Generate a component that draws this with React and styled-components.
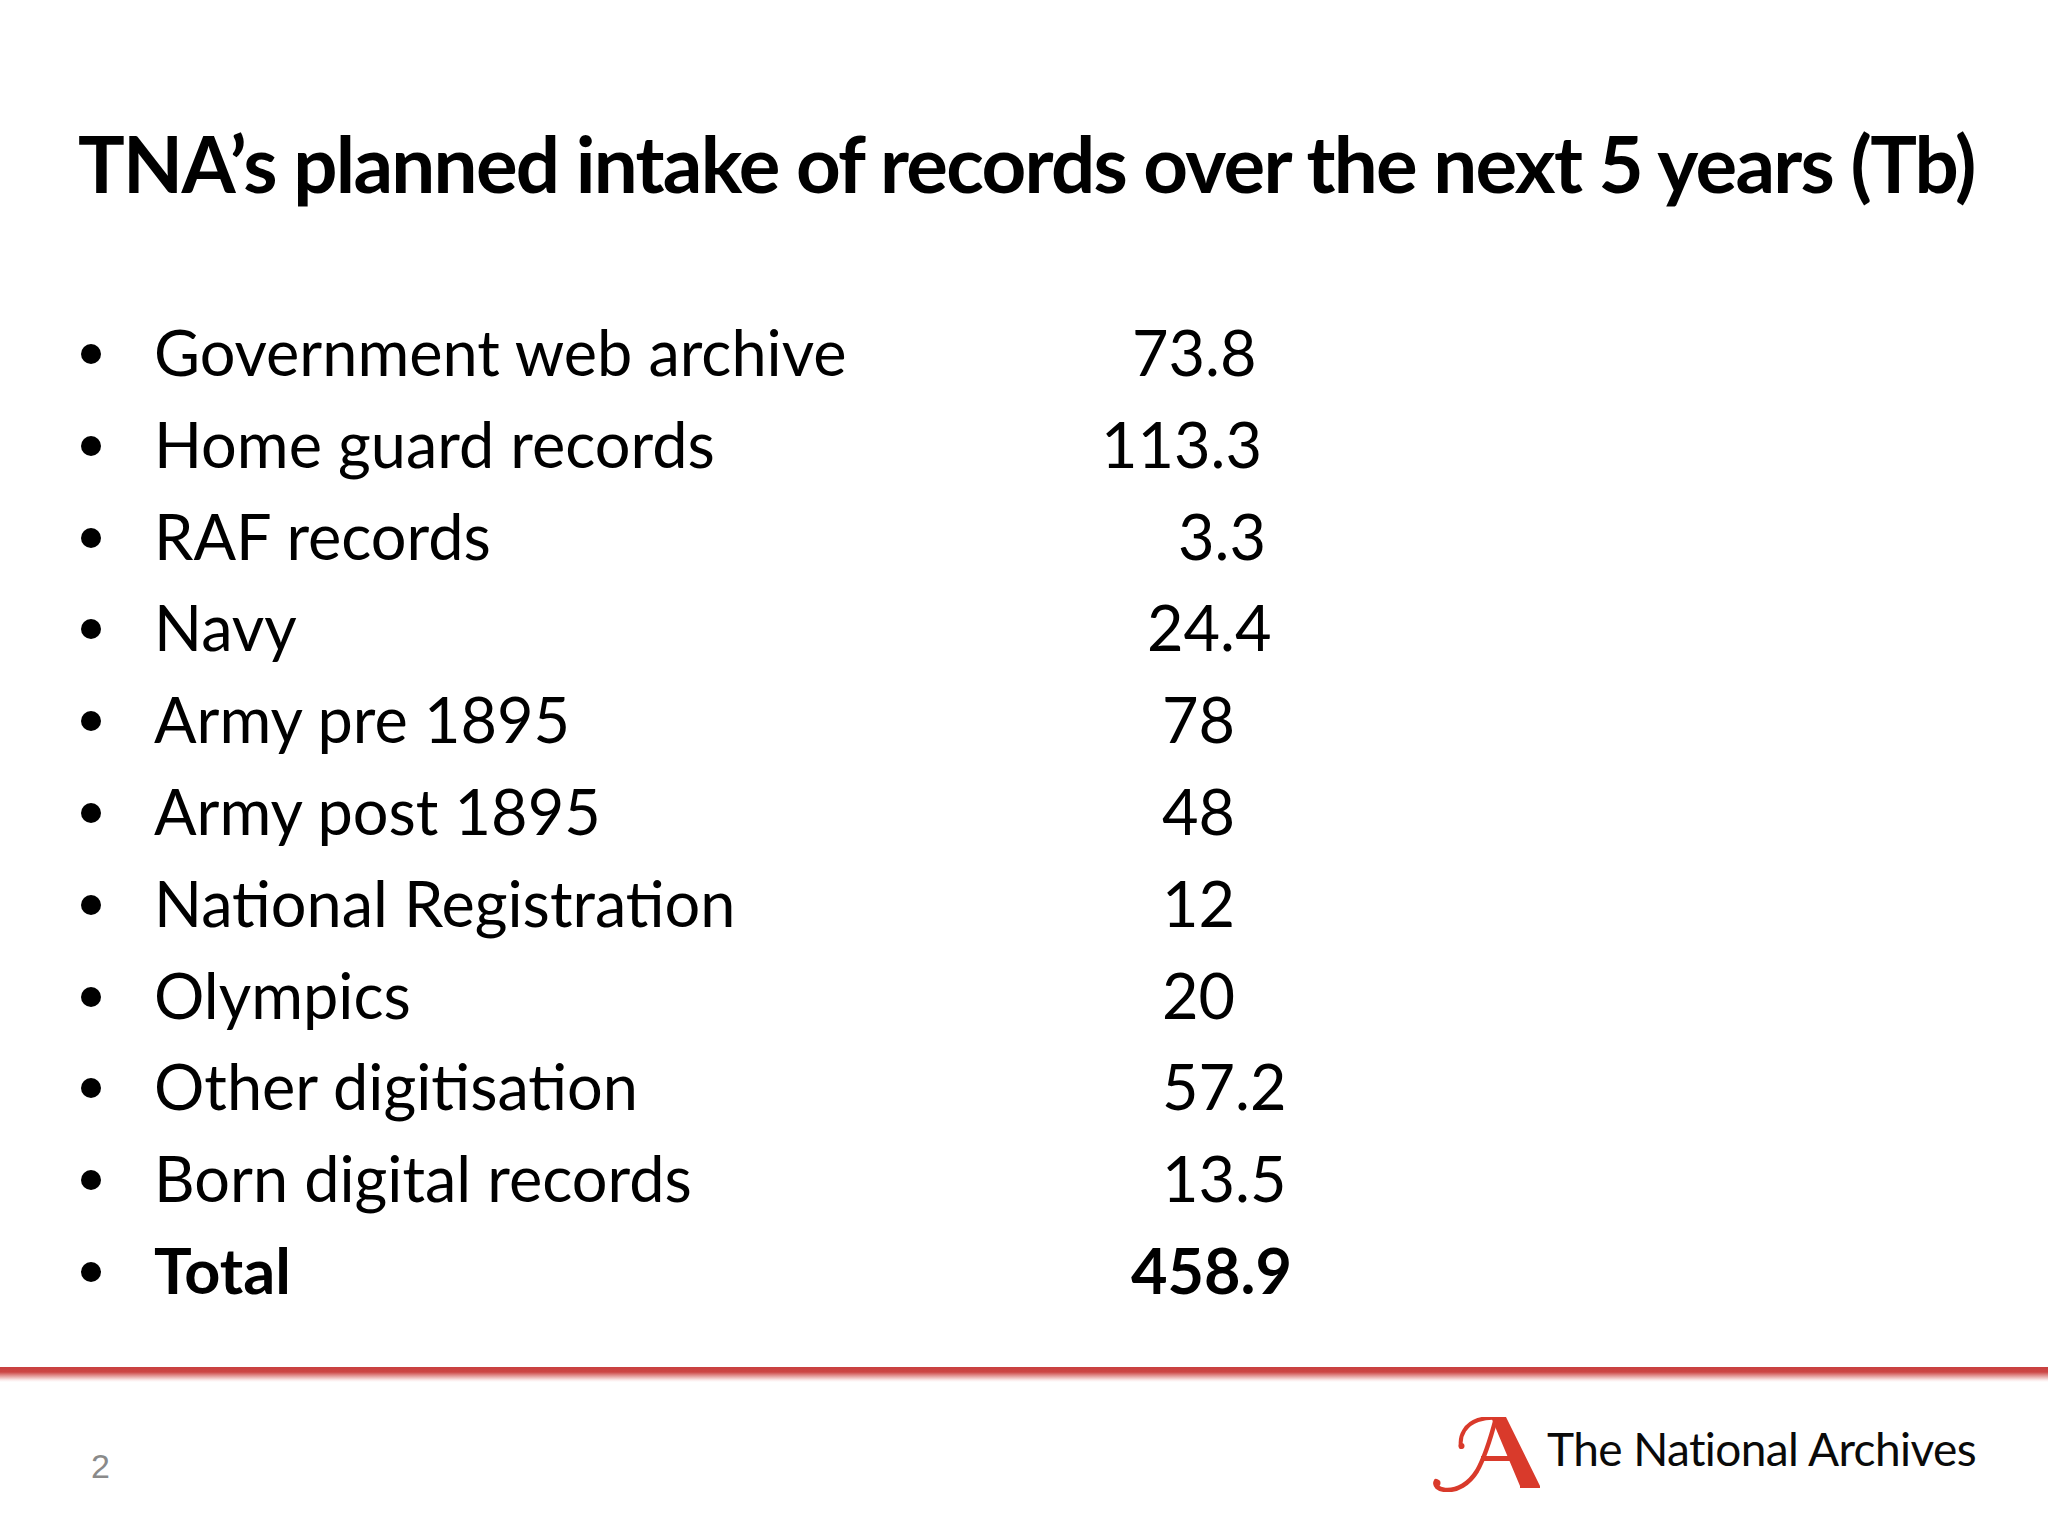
import React from "react";
import styled, { createGlobalStyle } from "styled-components";

//---global-------------------------------------------
const GlobalStyle = createGlobalStyle`
    html, body {
        margin: 0;
        padding: 0;
        background: #ffffff;
    }
    * {
        box-sizing: border-box;
    }
`;

//---styled-------------------------------------------
const Slide = styled.div`
    width: 2048px;
    height: 1536px;
    display: flex;
    flex-direction: column;
    background: #ffffff;
    font-family: Lato, "Open Sans", "Noto Sans", sans-serif;
    color: #000000;
    overflow: hidden;
`;

const Title = styled.h1`
    margin: 124px 0 0 78px;
    font-size: 78px;
    line-height: 1;
    font-weight: 700;
    letter-spacing: -1.7px;
    white-space: nowrap;
`;

const List = styled.ul`
    list-style: none;
    margin: 104px 0 0 0;
    padding: 0 0 0 81px;
`;

const Row = styled.li`
    display: grid;
    grid-template-columns: 73px 947px 1fr;
    height: 91.8px;
    font-size: 63px;
    line-height: 91.8px;
    font-weight: ${(p) => (p.$bold ? 700 : 400)};
    white-space: nowrap;
`;

const Bullet = styled.span`
    display: inline-block;
    width: 20px;
    height: 20px;
    margin-bottom: 12px;
    border-radius: 50%;
    background: #000000;
`;

const BulletCell = styled.span`
    display: block;
`;

const Label = styled.span`
    display: block;
`;

const Value = styled.span`
    display: block;
    padding-left: ${(p) => p.$indent}px;
`;

const Rule = styled.div`
    margin-top: auto;
    height: 15px;
    background: linear-gradient(
        to bottom,
        #c9403f 0px,
        #cc4645 5px,
        #e49a99 9px,
        #fbe9e9 13px,
        #ffffff 15px
    );
`;

const Footer = styled.div`
    height: 154px;
    display: flex;
    align-items: flex-start;
    padding: 0 72px 0 91px;
`;

const PageNumber = styled.span`
    margin-top: 67px;
    font-family: "Liberation Sans", Arial, sans-serif;
    font-size: 34px;
    line-height: 1;
    color: #8a8a8a;
`;

const Logo = styled.div`
    margin-left: auto;
    margin-top: 35px;
    display: flex;
    align-items: flex-start;
    gap: 7px;
`;

const LogoMark = styled.svg`
    width: 107px;
    height: 75px;
    flex: none;
`;

const LogoText = styled.span`
    margin-top: 9px;
    font-family: Lato, "Open Sans", sans-serif;
    font-size: 46px;
    line-height: 1;
    letter-spacing: -0.6px;
    color: #0a0a0a;
    white-space: nowrap;
`;

//---data-------------------------------------------
// value column starts at x=1101; indent reproduces the tab/space alignment of the slide
const records = [
    { label: "Government web archive", value: "73.8", indent: 31 },
    { label: "Home guard records", value: "113.3", indent: 0 },
    { label: "RAF records", value: "3.3", indent: 77 },
    { label: "Navy", value: "24.4", indent: 46 },
    { label: "Army pre 1895", value: "78", indent: 61 },
    { label: "Army post 1895", value: "48", indent: 61 },
    { label: "National Registration", value: "12", indent: 61 },
    { label: "Olympics", value: "20", indent: 61 },
    { label: "Other digitisation", value: "57.2", indent: 61 },
    { label: "Born digital records", value: "13.5", indent: 61 },
    { label: "Total", value: "458.9", indent: 30, bold: true },
];

const ArchivesMark = () => (
    <LogoMark viewBox="0 0 107 75">
        <polygon points="58,0 73,0 107,69 107,71 87,71 87,69" fill="#d93a2b" />
        <rect x="48" y="39" width="33" height="5" fill="#d93a2b" />
        <path
            d="M63 1 C58 20 52 40 44 54 C36 67 24 74 12 73 C5 72 1 69 3 64"
            stroke="#d93a2b"
            strokeWidth="4.5"
            fill="none"
            strokeLinecap="round"
        />
        <path
            d="M28 30 C26 18 33 7 45 3 C52 1 58 0 64 1"
            stroke="#d93a2b"
            strokeWidth="4"
            fill="none"
            strokeLinecap="round"
        />
        <circle cx="28.5" cy="29" r="3" fill="#d93a2b" />
        <circle cx="4" cy="66" r="3.5" fill="#d93a2b" />
    </LogoMark>
);

//---
const App = () => {
    return (
        <>
            <GlobalStyle />
            <Slide>
                <Title>TNA’s planned intake of records over the next 5 years (Tb)</Title>
                <List>
                    {records.map((r) => (
                        <Row key={r.label} $bold={r.bold}>
                            <BulletCell>
                                <Bullet />
                            </BulletCell>
                            <Label>{r.label}</Label>
                            <Value $indent={r.indent}>{r.value}</Value>
                        </Row>
                    ))}
                </List>
                <Rule />
                <Footer>
                    <PageNumber>2</PageNumber>
                    <Logo>
                        <ArchivesMark />
                        <LogoText>The National Archives</LogoText>
                    </Logo>
                </Footer>
            </Slide>
        </>
    );
};

export default App;
